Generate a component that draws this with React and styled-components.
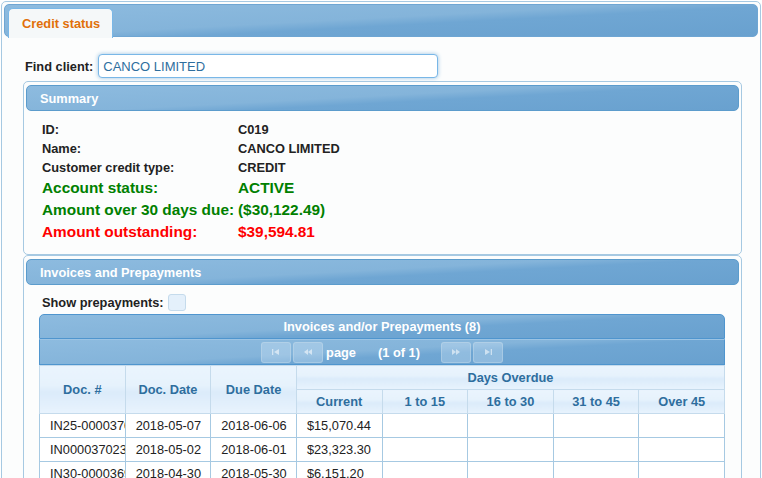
import React from 'react';
import styled, { createGlobalStyle } from 'styled-components';

const GlobalStyle = createGlobalStyle`
  html, body {
    margin: 0;
    padding: 0;
    overflow: hidden;
    background: #fff;
  }
  body {
    font-family: "Liberation Sans", Arial, sans-serif;
    font-size: 12.8px;
    color: #222;
  }
`;

const headerBg = `
  background: linear-gradient(177deg, #8dbbdf 0%, #84b4da 46%, #6fa6d3 58%, #69a1cf 100%);
`;

const TabView = styled.div`
  margin: 1px;
  border: 1px solid #a6c9e2;
  border-radius: 5px;
  padding: 2px;
  background: #fcfdfd;
  height: 600px;
`;

const TabNav = styled.div`
  ${headerBg}
  border: 1px solid #6fa6d3;
  border-radius: 5px;
  height: 28px;
  padding: 3px 3px 0;
  display: flex;
  align-items: flex-start;
`;

const Tab = styled.div`
  height: 29px;
  padding: 0 12px 0 13px;
  display: flex;
  align-items: center;
  background: #f5f8f9;
  border: 1px solid #79b7e7;
  border-bottom: none;
  border-radius: 5px 5px 0 0;
  color: #e17009;
  font-weight: bold;
  font-size: 12.8px;
`;

const Content = styled.div`
  padding: 17px 16px 0 19px;
`;

const FindRow = styled.div`
  display: flex;
  align-items: center;
  gap: 5px;
  margin-left: 2px;
  margin-bottom: 3px;
`;

const Label = styled.label`
  font-weight: bold;
  font-size: 12.8px;
  color: #222;
`;

const Input = styled.input`
  box-sizing: border-box;
  width: 340px;
  height: 24px;
  padding: 0 4px;
  border: 1px solid #79b7e7;
  border-radius: 4px;
  box-shadow: 0 0 4px #9cc3e2;
  background: #fff;
  color: #2e6e9e;
  font-family: "Liberation Sans", Arial, sans-serif;
  font-size: 13px;
  outline: none;
`;

const Fieldset = styled.div`
  border: 1px solid #a6c9e2;
  border-radius: 5px;
  padding: 3px 2px 0;
  background: #fcfdfd;
`;

const PanelHeader = styled.div`
  ${headerBg}
  border: 1px solid #5c9ccc;
  border-radius: 5px;
  height: 24px;
  padding: 0 13px;
  display: flex;
  align-items: center;
  color: #fff;
  font-weight: bold;
  font-size: 12.8px;
`;

const SummaryBody = styled.div`
  padding: 9px 14px 11px 16px;
`;

const InfoRow = styled.div`
  display: grid;
  grid-template-columns: 196px 1fr;
  align-items: center;
  height: ${(p) => (p.$big ? 22 : 19)}px;
  font-weight: bold;
  font-size: ${(p) => (p.$big ? 15.36 : 12.8)}px;
  color: ${(p) => p.$color || '#222'};
`;

const InvoicesBody = styled.div`
  padding: 8px 13px 0;
`;

const PrepayRow = styled.div`
  display: flex;
  align-items: center;
  gap: 4px;
  margin-left: 3px;
  height: 18px;
  margin-bottom: 3px;
`;

const CheckBox = styled.div`
  width: 16px;
  height: 15px;
  border: 1px solid #c5dbec;
  border-radius: 3px;
  background: #e4f0fb;
`;

const DataTable = styled.div`
  width: 686px;
`;

const Caption = styled.div`
  ${headerBg}
  border: 1px solid #4f95ce;
  border-radius: 5px 5px 0 0;
  height: 23px;
  display: flex;
  align-items: center;
  justify-content: center;
  color: #fff;
  font-weight: bold;
  font-size: 12.8px;
`;

const Pager = styled.div`
  ${headerBg}
  border: 1px solid #4f95ce;
  border-top: 1px solid #9cc4e4;
  height: 24px;
  display: flex;
  align-items: center;
  justify-content: center;
  color: #fff;
  font-weight: bold;
  font-size: 12.8px;
`;

const PageButton = styled.div`
  width: 28px;
  height: 19px;
  margin: 0 1px;
  border: 1px solid rgba(197, 219, 236, 0.45);
  border-radius: 3px;
  background: rgba(223, 239, 252, 0.3);
  display: flex;
  align-items: center;
  justify-content: center;
`;

const PageText = styled.span`
  margin: ${(p) => p.$margin};
`;

const Table = styled.table`
  width: 686px;
  table-layout: fixed;
  border-collapse: collapse;
  font-size: 12.8px;
`;

const Th = styled.th`
  height: 23px;
  padding: 0 4px;
  border: 1px solid #c5dbec;
  background: linear-gradient(to bottom, #eaf4fd 0%, #e6f2fc 40%, #dbebfa 55%, #e8f3fd 100%);
  color: #2e6e9e;
  font-weight: bold;
  text-align: center;
  white-space: nowrap;
`;

const Td = styled.td`
  height: 23px;
  padding: 0 0 0 10px;
  border: 1px solid #a6c9e2;
  background: #fff;
  color: #222;
  white-space: nowrap;
  overflow: hidden;
`;

const Arrow = ({ kind }) => {
  const c = 'rgba(255,255,255,0.55)';
  const shapes = {
    first: (
      <>
        <rect x="1" y="1" width="1.3" height="6" fill={c} />
        <path d="M8 1 L3 4 L8 7 Z" fill={c} />
      </>
    ),
    prev: (
      <>
        <path d="M5 1 L1 4 L5 7 Z" fill={c} />
        <path d="M9 1 L5 4 L9 7 Z" fill={c} />
      </>
    ),
    next: (
      <>
        <path d="M1 1 L5 4 L1 7 Z" fill={c} />
        <path d="M5 1 L9 4 L5 7 Z" fill={c} />
      </>
    ),
    last: (
      <>
        <path d="M2 1 L7 4 L2 7 Z" fill={c} />
        <rect x="7.7" y="1" width="1.3" height="6" fill={c} />
      </>
    ),
  };
  return (
    <svg width="10" height="8" viewBox="0 0 10 8">
      {shapes[kind]}
    </svg>
  );
};

const invoices = [
  { doc: 'IN25-00003706', date: '2018-05-07', due: '2018-06-06', current: '$15,070.44' },
  { doc: 'IN00003702305', date: '2018-05-02', due: '2018-06-01', current: '$23,323.30' },
  { doc: 'IN30-00003691', date: '2018-04-30', due: '2018-05-30', current: '$6,151.20' },
];

const App = () => {
  return (
    <>
      <GlobalStyle />
      <TabView>
        <TabNav>
          <Tab>Credit status</Tab>
        </TabNav>
        <Content>
          <FindRow>
            <Label>Find client:</Label>
            <Input defaultValue="CANCO LIMITED" />
          </FindRow>

          <Fieldset>
            <PanelHeader>Summary</PanelHeader>
            <SummaryBody>
              <InfoRow><span>ID:</span><span>C019</span></InfoRow>
              <InfoRow><span>Name:</span><span>CANCO LIMITED</span></InfoRow>
              <InfoRow><span>Customer credit type:</span><span>CREDIT</span></InfoRow>
              <InfoRow $big $color="#008000"><span>Account status:</span><span>ACTIVE</span></InfoRow>
              <InfoRow $big $color="#008000"><span>Amount over 30 days due:</span><span>($30,122.49)</span></InfoRow>
              <InfoRow $big $color="#ff0000"><span>Amount outstanding:</span><span>$39,594.81</span></InfoRow>
            </SummaryBody>
          </Fieldset>

          <Fieldset>
            <PanelHeader>Invoices and Prepayments</PanelHeader>
            <InvoicesBody>
              <PrepayRow>
                <Label>Show prepayments:</Label>
                <CheckBox />
              </PrepayRow>
              <DataTable>
                <Caption>Invoices and/or Prepayments (8)</Caption>
                <Pager>
                  <PageButton><Arrow kind="first" /></PageButton>
                  <PageButton><Arrow kind="prev" /></PageButton>
                  <PageText $margin="0 0 0 2px">page</PageText>
                  <PageText $margin="0 20px 0 22px">(1 of 1)</PageText>
                  <PageButton><Arrow kind="next" /></PageButton>
                  <PageButton><Arrow kind="last" /></PageButton>
                </Pager>
                <Table>
                  <thead>
                    <tr>
                      <Th rowSpan={2}>Doc. #</Th>
                      <Th rowSpan={2}>Doc. Date</Th>
                      <Th rowSpan={2}>Due Date</Th>
                      <Th colSpan={5}>Days Overdue</Th>
                    </tr>
                    <tr>
                      <Th>Current</Th>
                      <Th>1 to 15</Th>
                      <Th>16 to 30</Th>
                      <Th>31 to 45</Th>
                      <Th>Over 45</Th>
                    </tr>
                  </thead>
                  <tbody>
                    {invoices.map((row) => (
                      <tr key={row.doc}>
                        <Td>{row.doc}</Td>
                        <Td>{row.date}</Td>
                        <Td>{row.due}</Td>
                        <Td>{row.current}</Td>
                        <Td />
                        <Td />
                        <Td />
                        <Td />
                      </tr>
                    ))}
                  </tbody>
                </Table>
              </DataTable>
            </InvoicesBody>
          </Fieldset>
        </Content>
      </TabView>
    </>
  );
};

export default App;
